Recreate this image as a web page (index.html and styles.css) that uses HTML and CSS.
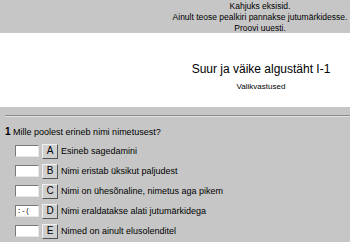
FILE: index.html
```html
<!DOCTYPE html>
<html lang="et">
<head>
    <meta charset="UTF-8">
    <title>Suur ja väike algustäht I-1</title>
    <link rel="stylesheet" href="styles.css">
</head>
<body>
    <div class="notice">
        <p>Kahjuks eksisid.</p>
        <p>Ainult teose pealkiri pannakse jutumärkidesse.</p>
        <p>Proovi uuesti.</p>
    </div>

    <div class="header">
        <h1>Suur ja väike algustäht I-1</h1>
        <p class="subtitle">Valikvastused</p>
    </div>

    <div class="quiz">
        <hr class="divider">
        <div class="question">
            <span class="qnum">1</span>
            <span>Mille poolest erineb nimi nimetusest?</span>
        </div>
        <div class="options">
            <div class="option">
                <input type="text" class="answer">
                <button class="letter">A</button>
                <span>Esineb sagedamini</span>
            </div>
            <div class="option">
                <input type="text" class="answer">
                <button class="letter">B</button>
                <span>Nimi eristab üksikut paljudest</span>
            </div>
            <div class="option">
                <input type="text" class="answer">
                <button class="letter">C</button>
                <span>Nimi on ühesõnaline, nimetus aga pikem</span>
            </div>
            <div class="option">
                <input type="text" class="answer" value=":-(">
                <button class="letter">D</button>
                <span>Nimi eraldatakse alati jutumärkidega</span>
            </div>
            <div class="option">
                <input type="text" class="answer">
                <button class="letter">E</button>
                <span>Nimed on ainult elusolenditel</span>
            </div>
        </div>
    </div>
</body>
</html>
```

FILE: styles.css
```css
* {
    box-sizing: border-box;
    margin: 0;
    padding: 0;
}
html, body {
    height: 100%;
}
body {
    font-family: 'Liberation Sans', Arial, sans-serif;
    color: #000;
    background-color: #c6c6c6;
    overflow: hidden;
}
.notice {
    height: 33px;
    padding: 1px 0 0 170px;
    text-align: center;
    white-space: nowrap;
    font-size: 8.5px;
    line-height: 11px;
    background-color: #c6c6c6;
}
.header {
    height: 74px;
    padding: 29px 0 0 172px;
    text-align: center;
    background-color: #fff;
}
.header h1 {
    font-size: 12px;
    font-weight: normal;
    line-height: 14px;
}
.subtitle {
    margin-top: 6px;
    font-size: 8px;
    line-height: 10px;
}
.quiz {
    padding: 8px 0 0 5px;
}
.divider {
    border: none;
    border-top: 1px solid #8a8a8a;
    border-bottom: 1px solid #e2e2e2;
    height: 0;
}
.question {
    margin-top: 9px;
    font-size: 9px;
    line-height: 12px;
}
.qnum {
    font-size: 10px;
    font-weight: bold;
}
.options {
    margin-top: 3px;
    padding-left: 10px;
}
.option {
    display: flex;
    align-items: center;
    height: 20px;
    font-size: 9px;
}
.answer {
    width: 24px;
    height: 12px;
    border: 1px solid;
    border-color: #7a7a7a #e8e8e8 #e8e8e8 #7a7a7a;
    background-color: #fff;
    font-family: 'Liberation Mono', monospace;
    font-size: 7px;
    padding: 0 1px;
    margin-right: 3px;
}
.letter {
    width: 16px;
    height: 15px;
    border: 1px solid;
    border-color: #f0f0f0 #555 #555 #f0f0f0;
    background-color: #cfcfcf;
    font-family: 'Liberation Sans', Arial, sans-serif;
    font-size: 10px;
    line-height: 12px;
    color: #000;
    margin-right: 3px;
}
```
